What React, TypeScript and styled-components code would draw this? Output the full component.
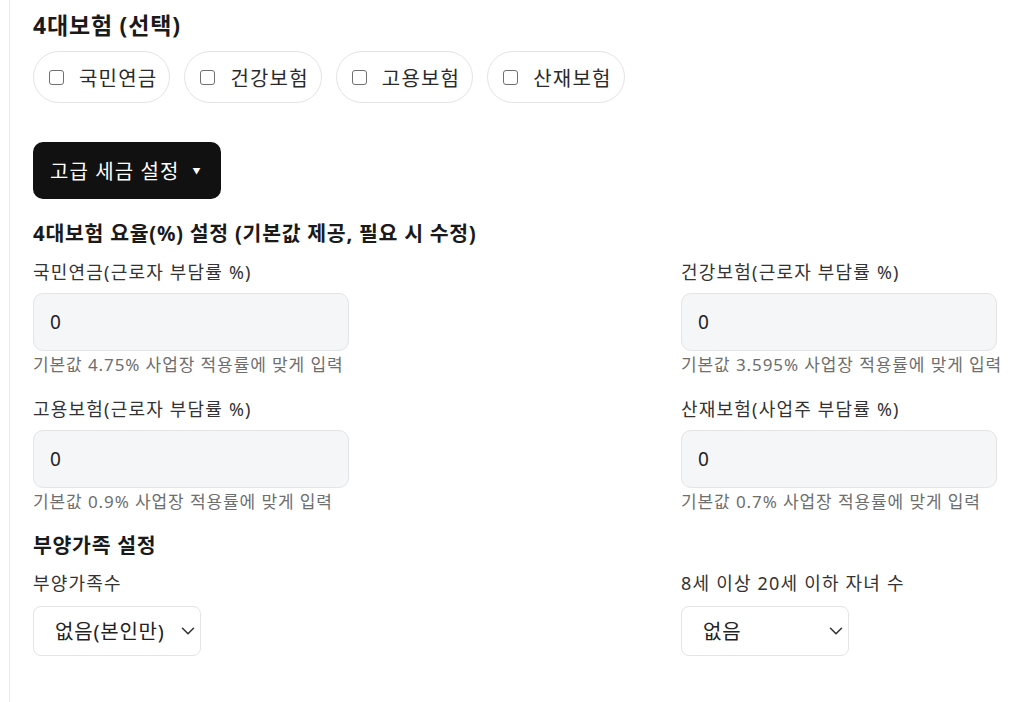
import styled, { createGlobalStyle } from "styled-components";
import { ChevronDown } from "lucide-react";

const GlobalStyle = createGlobalStyle`
  html, body {
    margin: 0;
    padding: 0;
    background: #ffffff;
  }
  body {
    font-family: "Noto Sans", "Noto Sans CJK KR", sans-serif;
    color: #222222;
  }
  * {
    box-sizing: border-box;
  }
`;

const insuranceOptions = ["국민연금", "건강보험", "고용보험", "산재보험"];

const rateFields = [
  { label: "국민연금(근로자 부담률 %)", help: "기본값 4.75% 사업장 적용률에 맞게 입력" },
  { label: "건강보험(근로자 부담률 %)", help: "기본값 3.595% 사업장 적용률에 맞게 입력" },
  { label: "고용보험(근로자 부담률 %)", help: "기본값 0.9% 사업장 적용률에 맞게 입력" },
  { label: "산재보험(사업주 부담률 %)", help: "기본값 0.7% 사업장 적용률에 맞게 입력" },
];

const App = () => {
  return (
    <Page>
      <GlobalStyle />
      <Panel>
        <Heading>4대보험 (선택)</Heading>
        <PillRow>
          {insuranceOptions.map((name) => (
            <Pill key={name}>
              <Check type="checkbox" />
              <span>{name}</span>
            </Pill>
          ))}
        </PillRow>

        <ToggleButton type="button">
          고급 세금 설정
          <Caret>▼</Caret>
        </ToggleButton>

        <SubHeading>4대보험 요율(%) 설정 (기본값 제공, 필요 시 수정)</SubHeading>
        <FieldGrid>
          {rateFields.map((f) => (
            <Field key={f.label}>
              <Label>{f.label}</Label>
              <NumberInput type="text" defaultValue="0" />
              <Help>{f.help}</Help>
            </Field>
          ))}
        </FieldGrid>

        <SubHeading $gap={18}>부양가족 설정</SubHeading>
        <FieldGrid $top={11}>
          <Field>
            <Label>부양가족수</Label>
            <SelectWrap>
              <Select defaultValue="0">
                <option value="0">없음(본인만)</option>
              </Select>
              <SelectIcon size={22} strokeWidth={1.7} />
            </SelectWrap>
          </Field>
          <Field>
            <Label>8세 이상 20세 이하 자녀 수</Label>
            <SelectWrap>
              <Select defaultValue="0">
                <option value="0">없음</option>
              </Select>
              <SelectIcon size={22} strokeWidth={1.7} />
            </SelectWrap>
          </Field>
        </FieldGrid>
      </Panel>
    </Page>
  );
};

export default App;

const Page = styled.div`
  padding-left: 9px;
  min-height: 100vh;
`;

const Panel = styled.div`
  border-left: 1px solid #ececec;
  min-height: 100vh;
  padding: 10px 27px 40px 23px;
  display: flex;
  flex-direction: column;
  align-items: flex-start;
`;

const Heading = styled.h2`
  margin: 0;
  font-size: 23px;
  line-height: 30px;
  letter-spacing: 0.8px;
  font-weight: 700;
  color: #1a1a1a;
`;

const PillRow = styled.div`
  display: flex;
  gap: 14px;
  margin-top: 11px;
`;

const Pill = styled.label`
  display: flex;
  align-items: center;
  gap: 15px;
  height: 52px;
  padding: 0 12px 0 15px;
  border: 1px solid #e4e4e4;
  border-radius: 26px;
  font-size: 20px;
  letter-spacing: 1.2px;
  color: #2a2a2a;
  background: #ffffff;
`;

const Check = styled.input`
  appearance: none;
  flex-shrink: 0;
  width: 15px;
  height: 15px;
  margin: 0;
  border: 1.5px solid #707070;
  border-radius: 3px;
  background: #ffffff;
`;

const ToggleButton = styled.button`
  margin-top: 39px;
  height: 57px;
  padding: 0 19px 0 17px;
  display: flex;
  align-items: center;
  background: #111111;
  color: #ffffff;
  border: none;
  border-radius: 10px;
  font-family: inherit;
  font-size: 20px;
  letter-spacing: 1.1px;
`;

const Caret = styled.span`
  font-size: 8px;
  margin-left: 13px;
`;

const SubHeading = styled.h3<{ $gap?: number }>`
  margin: ${(p) => p.$gap ?? 20}px 0 0;
  font-size: 20.5px;
  line-height: 28px;
  letter-spacing: 0.7px;
  font-weight: 700;
  color: #1a1a1a;
`;

const FieldGrid = styled.div<{ $top?: number }>`
  align-self: stretch;
  display: grid;
  grid-template-columns: 316px 316px;
  justify-content: space-between;
  row-gap: 20px;
  margin-top: ${(p) => p.$top ?? 12}px;
`;

const Field = styled.div`
  display: flex;
  flex-direction: column;
  align-items: flex-start;
  white-space: nowrap;
`;

const Label = styled.label`
  font-size: 18px;
  line-height: 26px;
  letter-spacing: 1.2px;
  color: #333333;
  margin-bottom: 8px;
`;

const NumberInput = styled.input`
  width: 316px;
  height: 58px;
  padding: 0 16px;
  background: #f5f6f8;
  border: 1px solid #e4e4e4;
  border-radius: 10px;
  font-family: inherit;
  font-size: 19px;
  color: #222222;
  outline: none;
`;

const Help = styled.span`
  margin-top: 3px;
  font-size: 17px;
  line-height: 22px;
  letter-spacing: 0.9px;
  color: #6e6e6e;
`;

const SelectWrap = styled.div`
  position: relative;
  width: 168px;
  margin-top: 2px;
`;

const Select = styled.select`
  width: 100%;
  height: 50px;
  padding: 0 30px 0 21px;
  appearance: none;
  background: #ffffff;
  border: 1px solid #e4e4e4;
  border-radius: 8px;
  font-family: inherit;
  font-size: 20px;
  letter-spacing: 0.8px;
  color: #222222;
`;

const SelectIcon = styled(ChevronDown)`
  position: absolute;
  right: 2px;
  top: 14px;
  color: #333333;
  pointer-events: none;
`;
